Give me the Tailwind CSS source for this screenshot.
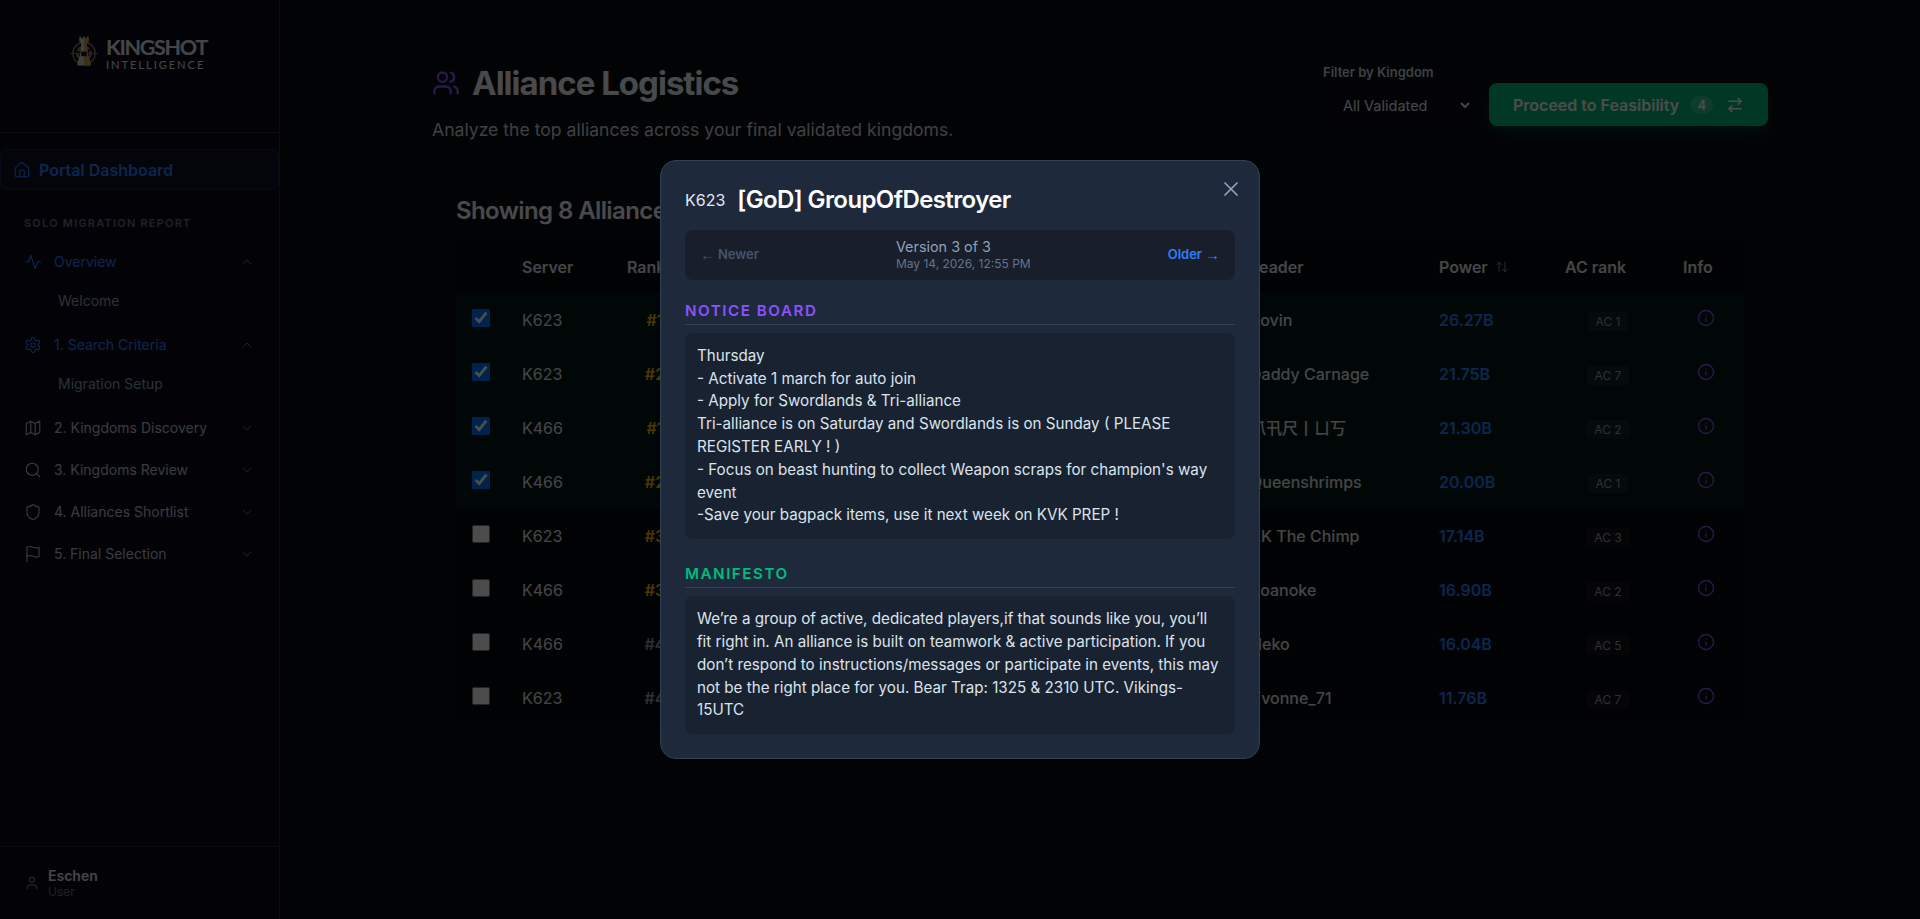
<!DOCTYPE html>
<html lang="en">
<head>
  <meta charset="UTF-8">
  <title>Alliance Logistics</title>
  <script src="https://cdn.jsdelivr.net/npm/@tailwindcss/browser@4"></script>
</head>
<body class="h-screen overflow-hidden flex bg-[#070a11] text-gray-200 font-['Inter','Noto_Sans_CJK_SC',sans-serif]">

  <!-- sidebar -->
  <aside class="w-[280px] shrink-0 h-full flex flex-col bg-[#0a0d1a] border-r border-[#1e293b]">
    <div class="h-[133px] shrink-0 border-b border-[#1e293b] pt-[35px] pl-[70px]">
      <div class="flex items-start gap-[8px] h-[36px]">
        <svg class="w-[28px] h-[35px]" viewBox="0 0 30 36" fill="none">
          <circle cx="15" cy="19" r="12" stroke="#8a7a5c" stroke-width="1.5"/>
          <circle cx="15" cy="19" r="7" stroke="#8a7a5c" stroke-width="3" stroke-dasharray="6 2"/>
          <path d="M0 19h30" stroke="#8a7a5c" stroke-width="1"/>
          <path d="M10 1h2v2h2V1h2v2h2V1h2v5l-2 2 1 12 3 9v3H8v-3l3-9 1-12-2-2z" fill="#d9d4c8"/>
          <path d="M15 1h1v2h2V1h2v5l-2 2 1 12 3 9v3h-7z" fill="#c9a04e"/>
          <rect x="12" y="17" width="6" height="5" fill="#1a1a1a"/>
        </svg>
        <div class="flex flex-col pt-px">
          <span class="font-['Lato',sans-serif] font-bold text-[21.5px] leading-[22px] tracking-[-1.3px] text-gray-200">KINGSHOT</span>
          <span class="font-['Lato',sans-serif] text-[11.2px] leading-[14px] tracking-[1.9px] text-gray-200">INTELLIGENCE</span>
        </div>
      </div>
    </div>

    <nav class="flex-1 pt-4 text-sm">
      <a class="h-[41px] flex items-center gap-2 pl-3 rounded-lg border border-blue-500/20 bg-blue-500/5 text-blue-500 text-base font-semibold">
        <svg class="w-[18px] h-[18px]" viewBox="0 0 24 24" fill="none" stroke="currentColor" stroke-width="1.5" stroke-linecap="round" stroke-linejoin="round"><path d="M15 21v-8a1 1 0 0 0-1-1h-4a1 1 0 0 0-1 1v8"/><path d="M3 10a2 2 0 0 1 .709-1.528l7-5.999a2 2 0 0 1 2.582 0l7 5.999A2 2 0 0 1 21 10v9a2 2 0 0 1-2 2H5a2 2 0 0 1-2-2z"/></svg>
        Portal Dashboard
      </a>

      <div class="mt-[25px] mb-[10px] px-6 text-[11px] leading-4 font-semibold tracking-[0.11em] text-slate-500">SOLO MIGRATION REPORT</div>

      <div class="h-[42px] flex items-center gap-3 px-6 text-blue-500">
        <svg class="w-[18px] h-[18px]" viewBox="0 0 24 24" fill="none" stroke="currentColor" stroke-width="1.5" stroke-linecap="round" stroke-linejoin="round"><path d="M22 12h-4l-3 9L9 3l-3 9H2"/></svg>
        <span class="flex-1">Overview</span>
        <svg class="w-4 h-4 text-gray-500" viewBox="0 0 24 24" fill="none" stroke="currentColor" stroke-width="1.5" stroke-linecap="round" stroke-linejoin="round"><path d="m18 15-6-6-6 6"/></svg>
      </div>
      <div class="h-[36px] mb-[5px] flex items-center pl-[58px] text-slate-400">Welcome</div>

      <div class="h-[42px] flex items-center gap-3 px-6 text-blue-500">
        <svg class="w-[18px] h-[18px]" viewBox="0 0 24 24" fill="none" stroke="currentColor" stroke-width="1.5" stroke-linecap="round" stroke-linejoin="round"><path d="M12.22 2h-.44a2 2 0 0 0-2 2v.18a2 2 0 0 1-1 1.73l-.43.25a2 2 0 0 1-2 0l-.15-.08a2 2 0 0 0-2.73.73l-.22.38a2 2 0 0 0 .73 2.73l.15.1a2 2 0 0 1 1 1.72v.51a2 2 0 0 1-1 1.74l-.15.09a2 2 0 0 0-.73 2.73l.22.38a2 2 0 0 0 2.73.73l.15-.08a2 2 0 0 1 2 0l.43.25a2 2 0 0 1 1 1.73V20a2 2 0 0 0 2 2h.44a2 2 0 0 0 2-2v-.18a2 2 0 0 1 1-1.73l.43-.25a2 2 0 0 1 2 0l.15.08a2 2 0 0 0 2.73-.73l.22-.39a2 2 0 0 0-.73-2.73l-.15-.08a2 2 0 0 1-1-1.74v-.5a2 2 0 0 1 1-1.74l.15-.09a2 2 0 0 0 .73-2.73l-.22-.38a2 2 0 0 0-2.73-.73l-.15.08a2 2 0 0 1-2 0l-.43-.25a2 2 0 0 1-1-1.73V4a2 2 0 0 0-2-2z"/><circle cx="12" cy="12" r="3"/></svg>
        <span class="flex-1">1. Search Criteria</span>
        <svg class="w-4 h-4 text-gray-500" viewBox="0 0 24 24" fill="none" stroke="currentColor" stroke-width="1.5" stroke-linecap="round" stroke-linejoin="round"><path d="m18 15-6-6-6 6"/></svg>
      </div>
      <div class="h-[36px] mb-[5px] flex items-center pl-[58px] text-slate-400">Migration Setup</div>

      <div class="h-[42px] flex items-center gap-3 px-6 text-[#c0c5cd]">
        <svg class="w-[18px] h-[18px]" viewBox="0 0 24 24" fill="none" stroke="currentColor" stroke-width="1.5" stroke-linecap="round" stroke-linejoin="round"><polygon points="3 6 9 3 15 6 21 3 21 18 15 21 9 18 3 21"/><line x1="9" x2="9" y1="3" y2="18"/><line x1="15" x2="15" y1="6" y2="21"/></svg>
        <span class="flex-1">2. Kingdoms Discovery</span>
        <svg class="w-4 h-4 text-gray-500" viewBox="0 0 24 24" fill="none" stroke="currentColor" stroke-width="1.5" stroke-linecap="round" stroke-linejoin="round"><path d="m6 9 6 6 6-6"/></svg>
      </div>
      <div class="h-[42px] flex items-center gap-3 px-6 text-[#c0c5cd]">
        <svg class="w-[18px] h-[18px]" viewBox="0 0 24 24" fill="none" stroke="currentColor" stroke-width="1.5" stroke-linecap="round" stroke-linejoin="round"><circle cx="11" cy="11" r="8"/><path d="m21 21-4.3-4.3"/></svg>
        <span class="flex-1">3. Kingdoms Review</span>
        <svg class="w-4 h-4 text-gray-500" viewBox="0 0 24 24" fill="none" stroke="currentColor" stroke-width="1.5" stroke-linecap="round" stroke-linejoin="round"><path d="m6 9 6 6 6-6"/></svg>
      </div>
      <div class="h-[42px] flex items-center gap-3 px-6 text-[#c0c5cd]">
        <svg class="w-[18px] h-[18px]" viewBox="0 0 24 24" fill="none" stroke="currentColor" stroke-width="1.5" stroke-linecap="round" stroke-linejoin="round"><path d="M20 13c0 5-3.5 7.5-7.66 8.95a1 1 0 0 1-.67-.01C7.5 20.5 4 18 4 13V6a1 1 0 0 1 1-1c2 0 4.5-1.2 6.24-2.72a1.17 1.17 0 0 1 1.52 0C14.51 3.81 17 5 19 5a1 1 0 0 1 1 1z"/></svg>
        <span class="flex-1">4. Alliances Shortlist</span>
        <svg class="w-4 h-4 text-gray-500" viewBox="0 0 24 24" fill="none" stroke="currentColor" stroke-width="1.5" stroke-linecap="round" stroke-linejoin="round"><path d="m6 9 6 6 6-6"/></svg>
      </div>
      <div class="h-[42px] flex items-center gap-3 px-6 text-[#c0c5cd]">
        <svg class="w-[18px] h-[18px]" viewBox="0 0 24 24" fill="none" stroke="currentColor" stroke-width="1.5" stroke-linecap="round" stroke-linejoin="round"><path d="M4 15s1-1 4-1 5 2 8 2 4-1 4-1V3s-1 1-4 1-5-2-8-2-4 1-4 1z"/><line x1="4" x2="4" y1="22" y2="15"/></svg>
        <span class="flex-1">5. Final Selection</span>
        <svg class="w-4 h-4 text-gray-500" viewBox="0 0 24 24" fill="none" stroke="currentColor" stroke-width="1.5" stroke-linecap="round" stroke-linejoin="round"><path d="m6 9 6 6 6-6"/></svg>
      </div>
    </nav>

    <div class="h-[73px] shrink-0 border-t border-[#1e293b] flex items-center gap-2 px-6">
      <svg class="w-4 h-4 text-gray-400" viewBox="0 0 24 24" fill="none" stroke="currentColor" stroke-width="1.5" stroke-linecap="round" stroke-linejoin="round"><path d="M19 21v-2a4 4 0 0 0-4-4H9a4 4 0 0 0-4 4v2"/><circle cx="12" cy="7" r="4"/></svg>
      <div class="flex flex-col">
        <span class="text-sm leading-[18px] font-semibold text-gray-200">Eschen</span>
        <span class="text-xs leading-[14px] text-gray-500">User</span>
      </div>
    </div>
  </aside>

  <!-- main -->
  <main class="flex-1 min-w-0">
    <div class="max-w-[1400px] mx-auto px-8 pt-[64px]">
      <div class="flex justify-between items-start">
        <div>
          <h1 class="-mt-px flex items-center gap-3 text-[33px] leading-10 font-bold tracking-[-0.03em] text-slate-100">
            <svg class="w-7 h-7 text-violet-500" viewBox="0 0 24 24" fill="none" stroke="currentColor" stroke-width="2" stroke-linecap="round" stroke-linejoin="round"><path d="M16 21v-2a4 4 0 0 0-4-4H6a4 4 0 0 0-4 4v2"/><circle cx="9" cy="7" r="4"/><path d="M22 21v-2a4 4 0 0 0-3-3.87"/><path d="M16 3.13a4 4 0 0 1 0 7.75"/></svg>
            Alliance Logistics
          </h1>
          <p class="mt-[13px] text-[17.6px] leading-7 text-gray-300">Analyze the top alliances across your final validated kingdoms.</p>
        </div>
        <div class="-mt-px flex items-end gap-4">
          <div class="pb-[2px]">
            <label class="block mb-[5px] text-[13px] leading-[18px] font-semibold text-slate-300">Filter by Kingdom</label>
            <select class="w-[150px] h-[38px] pl-4 rounded-lg bg-[#0a0d1a] text-[14.5px] text-gray-200 scheme-dark">
              <option>All Validated</option>
            </select>
          </div>
          <button class="h-[43px] w-[279px] flex items-center pl-6 gap-3 rounded-lg bg-emerald-500 text-white text-base font-semibold shadow-lg shadow-emerald-500/20">
            Proceed to Feasibility
            <span class="-ml-px mr-px w-[23px] h-[18px] rounded-full bg-white/20 text-[13px] leading-[18px] text-center">4</span>
            <svg class="w-[18px] h-[18px]" viewBox="0 0 24 24" fill="none" stroke="currentColor" stroke-width="2" stroke-linecap="round" stroke-linejoin="round"><path d="m16 3 4 4-4 4"/><path d="M20 7H4"/><path d="m8 21-4-4 4-4"/><path d="M4 17h16"/></svg>
          </button>
        </div>
      </div>

      <div class="px-6 pt-[51px]">
        <h2 class="mb-[13px] text-2xl leading-8 font-semibold tracking-tight text-slate-100">Showing 8 Alliances</h2>
        <table class="w-full table-fixed bg-[#05070c] text-base">
          <colgroup>
            <col class="w-[50px]"><col class="w-[105px]"><col class="w-[80px]"><col class="w-[543px]"><col class="w-[189px]"><col class="w-[126px]"><col class="w-[118px]"><col class="w-[77px]">
          </colgroup>
          <thead>
            <tr class="h-[53px] text-left font-semibold text-gray-200">
              <th></th>
              <th class="px-4 font-semibold">Server</th>
              <th class="px-4 font-semibold">Rank</th>
              <th class="px-4 font-semibold">Alliance</th>
              <th class="px-4 font-semibold">Leader</th>
              <th class="px-4 font-semibold"><span class="flex items-center gap-[7px]">Power <svg class="w-[14px] h-[14px] opacity-70" viewBox="0 0 24 24" fill="none" stroke="currentColor" stroke-width="1.5" stroke-linecap="round" stroke-linejoin="round"><path d="m21 16-4 4-4-4"/><path d="M17 20V4"/><path d="m3 8 4-4 4 4"/><path d="M7 4v16"/></svg></span></th>
              <th class="px-4 font-semibold">AC rank</th>
              <th class="px-4 font-semibold">Info</th>
            </tr>
          </thead>
          <tbody>
            <tr class="h-[54px] bg-emerald-500/10">
              <td class="pl-4"><input type="checkbox" checked class="block w-[18px] h-[18px] -mt-[4px]"></td>
              <td class="px-4 text-gray-200">K623</td>
              <td class="pl-2 text-center font-semibold text-amber-400">#1</td>
              <td></td>
              <td class="px-4 font-medium text-gray-200">Rovin</td>
              <td class="px-4 font-semibold text-blue-500">26.27B</td>
              <td class="text-center"><span class="inline-block px-2 rounded bg-white/5 text-xs leading-[19px] text-gray-400">AC 1</span></td>
              <td><svg class="w-[18px] h-[18px] mx-auto -mt-[4px] text-violet-500" viewBox="0 0 24 24" fill="none" stroke="currentColor" stroke-width="1.75" stroke-linecap="round" stroke-linejoin="round"><circle cx="12" cy="12" r="10"/><path d="M12 16v-4"/><path d="M12 8h.01"/></svg></td>
            </tr>
            <tr class="h-[54px] bg-emerald-500/10">
              <td class="pl-4"><input type="checkbox" checked class="block w-[18px] h-[18px] -mt-[4px]"></td>
              <td class="px-4 text-gray-200">K623</td>
              <td class="pl-2 text-center font-semibold text-amber-400">#2</td>
              <td></td>
              <td class="px-4 font-medium text-gray-200">Daddy Carnage</td>
              <td class="px-4 font-semibold text-blue-500">21.75B</td>
              <td class="text-center"><span class="inline-block px-2 rounded bg-white/5 text-xs leading-[19px] text-gray-400">AC 7</span></td>
              <td><svg class="w-[18px] h-[18px] mx-auto -mt-[4px] text-violet-500" viewBox="0 0 24 24" fill="none" stroke="currentColor" stroke-width="1.75" stroke-linecap="round" stroke-linejoin="round"><circle cx="12" cy="12" r="10"/><path d="M12 16v-4"/><path d="M12 8h.01"/></svg></td>
            </tr>
            <tr class="h-[54px] bg-emerald-500/10">
              <td class="pl-4"><input type="checkbox" checked class="block w-[18px] h-[18px] -mt-[4px]"></td>
              <td class="px-4 text-gray-200">K466</td>
              <td class="pl-2 text-center font-semibold text-amber-400">#1</td>
              <td></td>
              <td class="px-4 font-medium text-gray-200">爪卂尺丨ㄩ丂</td>
              <td class="px-4 font-semibold text-blue-500">21.30B</td>
              <td class="text-center"><span class="inline-block px-2 rounded bg-white/5 text-xs leading-[19px] text-gray-400">AC 2</span></td>
              <td><svg class="w-[18px] h-[18px] mx-auto -mt-[4px] text-violet-500" viewBox="0 0 24 24" fill="none" stroke="currentColor" stroke-width="1.75" stroke-linecap="round" stroke-linejoin="round"><circle cx="12" cy="12" r="10"/><path d="M12 16v-4"/><path d="M12 8h.01"/></svg></td>
            </tr>
            <tr class="h-[54px] bg-emerald-500/10">
              <td class="pl-4"><input type="checkbox" checked class="block w-[18px] h-[18px] -mt-[4px]"></td>
              <td class="px-4 text-gray-200">K466</td>
              <td class="pl-2 text-center font-semibold text-amber-400">#2</td>
              <td></td>
              <td class="px-4 font-medium text-gray-200">Queenshrimps</td>
              <td class="px-4 font-semibold text-blue-500">20.00B</td>
              <td class="text-center"><span class="inline-block px-2 rounded bg-white/5 text-xs leading-[19px] text-gray-400">AC 1</span></td>
              <td><svg class="w-[18px] h-[18px] mx-auto -mt-[4px] text-violet-500" viewBox="0 0 24 24" fill="none" stroke="currentColor" stroke-width="1.75" stroke-linecap="round" stroke-linejoin="round"><circle cx="12" cy="12" r="10"/><path d="M12 16v-4"/><path d="M12 8h.01"/></svg></td>
            </tr>
            <tr class="h-[54px]">
              <td class="pl-4"><input type="checkbox" class="block w-[18px] h-[18px] -mt-[4px]"></td>
              <td class="px-4 text-gray-200">K623</td>
              <td class="pl-2 text-center font-semibold text-amber-400">#3</td>
              <td></td>
              <td class="px-4 font-medium text-gray-200">KK The Chimp</td>
              <td class="px-4 font-semibold text-blue-500">17.14B</td>
              <td class="text-center"><span class="inline-block px-2 rounded bg-white/5 text-xs leading-[19px] text-gray-400">AC 3</span></td>
              <td><svg class="w-[18px] h-[18px] mx-auto -mt-[4px] text-violet-500" viewBox="0 0 24 24" fill="none" stroke="currentColor" stroke-width="1.75" stroke-linecap="round" stroke-linejoin="round"><circle cx="12" cy="12" r="10"/><path d="M12 16v-4"/><path d="M12 8h.01"/></svg></td>
            </tr>
            <tr class="h-[54px]">
              <td class="pl-4"><input type="checkbox" class="block w-[18px] h-[18px] -mt-[4px]"></td>
              <td class="px-4 text-gray-200">K466</td>
              <td class="pl-2 text-center font-semibold text-amber-400">#3</td>
              <td></td>
              <td class="px-4 font-medium text-gray-200">Roanoke</td>
              <td class="px-4 font-semibold text-blue-500">16.90B</td>
              <td class="text-center"><span class="inline-block px-2 rounded bg-white/5 text-xs leading-[19px] text-gray-400">AC 2</span></td>
              <td><svg class="w-[18px] h-[18px] mx-auto -mt-[4px] text-violet-500" viewBox="0 0 24 24" fill="none" stroke="currentColor" stroke-width="1.75" stroke-linecap="round" stroke-linejoin="round"><circle cx="12" cy="12" r="10"/><path d="M12 16v-4"/><path d="M12 8h.01"/></svg></td>
            </tr>
            <tr class="h-[54px]">
              <td class="pl-4"><input type="checkbox" class="block w-[18px] h-[18px] -mt-[4px]"></td>
              <td class="px-4 text-gray-200">K466</td>
              <td class="pl-2 text-center font-semibold text-slate-400">#4</td>
              <td></td>
              <td class="px-4 font-medium text-gray-200">Neko</td>
              <td class="px-4 font-semibold text-blue-500">16.04B</td>
              <td class="text-center"><span class="inline-block px-2 rounded bg-white/5 text-xs leading-[19px] text-gray-400">AC 5</span></td>
              <td><svg class="w-[18px] h-[18px] mx-auto -mt-[4px] text-violet-500" viewBox="0 0 24 24" fill="none" stroke="currentColor" stroke-width="1.75" stroke-linecap="round" stroke-linejoin="round"><circle cx="12" cy="12" r="10"/><path d="M12 16v-4"/><path d="M12 8h.01"/></svg></td>
            </tr>
            <tr class="h-[54px]">
              <td class="pl-4"><input type="checkbox" class="block w-[18px] h-[18px] -mt-[4px]"></td>
              <td class="px-4 text-gray-200">K623</td>
              <td class="pl-2 text-center font-semibold text-slate-400">#4</td>
              <td></td>
              <td class="px-4 font-medium text-gray-200">Yvonne_71</td>
              <td class="px-4 font-semibold text-blue-500">11.76B</td>
              <td class="text-center"><span class="inline-block px-2 rounded bg-white/5 text-xs leading-[19px] text-gray-400">AC 7</span></td>
              <td><svg class="w-[18px] h-[18px] mx-auto -mt-[4px] text-violet-500" viewBox="0 0 24 24" fill="none" stroke="currentColor" stroke-width="1.75" stroke-linecap="round" stroke-linejoin="round"><circle cx="12" cy="12" r="10"/><path d="M12 16v-4"/><path d="M12 8h.01"/></svg></td>
            </tr>
          </tbody>
        </table>
      </div>
    </div>
  </main>

  <!-- version history modal -->
  <div class="fixed inset-0 z-50 flex items-center justify-center bg-black/70">
    <div class="relative w-[600px] p-6 rounded-2xl bg-[#1e293b] border border-[#334155]">
      <button class="absolute top-4 right-4 text-slate-400">
        <svg class="w-6 h-6" viewBox="0 0 24 24" fill="none" stroke="currentColor" stroke-width="1.75" stroke-linecap="round" stroke-linejoin="round"><path d="M18 6 6 18"/><path d="m6 6 12 12"/></svg>
      </button>
      <div class="-mt-px flex items-center gap-3 mb-[14px]">
        <span class="text-base text-slate-200">K623</span>
        <h3 class="text-2xl leading-8 font-semibold text-white tracking-tight">[GoD] GroupOfDestroyer</h3>
      </div>

      <div class="h-[50px] px-4 flex items-center justify-between rounded-lg bg-[#181e2a]">
        <span class="flex items-center gap-[3px] text-[13px] font-semibold text-slate-600"><span class="-ml-px font-['Liberation_Sans'] text-[15px] leading-4 font-normal">←</span> Newer</span>
        <div>
          <div class="text-[14.4px] leading-[18px] text-slate-400">Version 3 of 3</div>
          <div class="text-xs leading-4 text-slate-500">May 14, 2026, 12:55 PM</div>
        </div>
        <span class="flex items-center gap-[3px] text-[13px] font-semibold text-blue-500">Older <span class="-mr-px font-['Liberation_Sans'] text-[15px] leading-4 font-normal">→</span></span>
      </div>

      <div class="mt-[21px] mb-2 pb-[3px] border-b border-[#334155] text-[15.2px] leading-5 font-semibold tracking-[0.1em] text-violet-500">NOTICE BOARD</div>
      <div class="p-3 rounded-lg bg-[#192230] text-[15.2px] leading-[22.8px] text-[#dbe2ec] whitespace-pre-line">Thursday
- Activate 1 march for auto join
- Apply for Swordlands &amp; Tri-alliance
Tri-alliance is on Saturday and Swordlands is on Sunday ( PLEASE REGISTER EARLY ! )
- Focus on beast hunting to collect Weapon scraps for champion's way event
-Save your bagpack items, use it next week on KVK PREP !</div>

      <div class="mt-[25px] mb-2 pb-[3px] border-b border-[#334155] text-[15.2px] leading-5 font-semibold tracking-[0.1em] text-emerald-500">MANIFESTO</div>
      <div class="p-3 rounded-lg bg-[#192230] text-[15.2px] leading-[22.8px] text-[#dbe2ec]">We’re a group of active, dedicated players,if that sounds like you, you’ll fit right in. An alliance is built on teamwork &amp; active participation. If you don’t respond to instructions/messages or participate in events, this may not be the right place for you. Bear Trap: 1325 &amp; 2310 UTC. Vikings-15UTC</div>
    </div>
  </div>
</body>
</html>
